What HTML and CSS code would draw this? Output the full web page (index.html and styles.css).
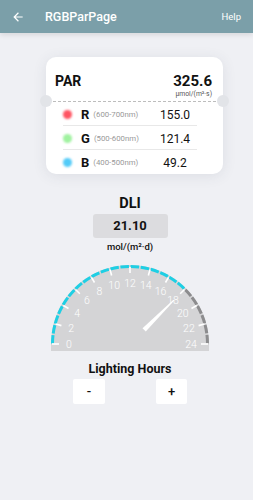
FILE: index.html
```html
<!DOCTYPE html>
<html>
<head>
<meta charset="utf-8">
<link rel="stylesheet" href="styles.css">
</head>
<body>
<header class="appbar">
  <svg class="back" viewBox="0 0 24 24" width="14" height="14"><path d="M20 11H7.83l5.59-5.59L12 4l-8 8 8 8 1.41-1.41L7.83 13H20v-2z" fill="#fff"/></svg>
  <div class="title">RGBParPage</div>
  <div class="help">Help</div>
</header>
<main>
  <section class="card">
    <span class="notch notch-l"></span>
    <span class="notch notch-r"></span>
    <div class="card-top">
      <div class="par">PAR</div>
      <div class="par-val">
        <div class="num">325.6</div>
        <div class="unit">µmol/(m²·s)</div>
      </div>
    </div>
    <div class="dash"></div>
    <div class="rows">
      <div class="row"><span class="dot red"></span><span class="ch">R</span><span class="range">(600-700nm)</span><span class="val">155.0</span></div>
      <div class="row"><span class="dot green"></span><span class="ch">G</span><span class="range">(500-600nm)</span><span class="val">121.4</span></div>
      <div class="row"><span class="dot blue"></span><span class="ch">B</span><span class="range">(400-500nm)</span><span class="val">49.2</span></div>
    </div>
  </section>
  <section class="dli">
    <div class="dli-title">DLI</div>
    <div class="dli-box">21.10</div>
    <div class="dli-unit">mol/(m²·d)</div>
  </section>
  <svg class="gauge" viewBox="0 0 253 93" width="253" height="93">
    <path d="M51 93 L51 86 A79 79 0 0 1 209 86 L209 93 Z" fill="#d4d4d6"/>
    <path d="M52.5 86 A77.5 77.5 0 0 1 184.8 31.2" fill="none" stroke="#1ecfe4" stroke-width="3" stroke-dasharray="8.55 1.6" stroke-dashoffset="-0.4"/>
    <path d="M184.8 31.2 A77.5 77.5 0 0 1 207.5 86" fill="none" stroke="#8c8c8e" stroke-width="3" stroke-dasharray="8.55 1.6" stroke-dashoffset="-0.8"/>
    <g stroke="#fff" stroke-width="1.6">
      <line x1="59" y1="86" x2="52" y2="86"/>
      <line x1="59" y1="86" x2="53" y2="86" transform="rotate(15 130 86)"/>
      <line x1="59" y1="86" x2="53" y2="86" transform="rotate(30 130 86)"/>
      <line x1="59" y1="86" x2="53" y2="86" transform="rotate(45 130 86)"/>
      <line x1="59" y1="86" x2="53" y2="86" transform="rotate(60 130 86)"/>
      <line x1="59" y1="86" x2="53" y2="86" transform="rotate(75 130 86)"/>
      <line x1="59" y1="86" x2="53" y2="86" transform="rotate(90 130 86)"/>
      <line x1="59" y1="86" x2="53" y2="86" transform="rotate(105 130 86)"/>
      <line x1="59" y1="86" x2="53" y2="86" transform="rotate(120 130 86)"/>
      <line x1="59" y1="86" x2="53" y2="86" transform="rotate(135 130 86)"/>
      <line x1="59" y1="86" x2="53" y2="86" transform="rotate(150 130 86)"/>
      <line x1="59" y1="86" x2="53" y2="86" transform="rotate(165 130 86)"/>
      <line x1="59" y1="86" x2="52" y2="86" transform="rotate(180 130 86)"/>
    </g>
    <g class="labels" fill="#fff" text-anchor="middle" dominant-baseline="central">
      <text x="69" y="86">0</text>
      <text x="71.1" y="70.2">2</text>
      <text x="77.2" y="55.5">4</text>
      <text x="86.9" y="42.9">6</text>
      <text x="99.5" y="33.2">8</text>
      <text x="114.2" y="27.1">10</text>
      <text x="130" y="25">12</text>
      <text x="145.8" y="27.1">14</text>
      <text x="160.5" y="33.2">16</text>
      <text x="173.1" y="42.9">18</text>
      <text x="182.8" y="55.5">20</text>
      <text x="188.9" y="70.2">22</text>
      <text x="191" y="86">24</text>
    </g>
    <polygon points="150,83.7 192,85.4 192,86.6 150,88.3" fill="#fff" transform="rotate(-45 130 86)"/>
  </svg>
  <section class="hours">
    <div class="hours-title">Lighting Hours</div>
    <div class="btns">
      <div class="btn">-</div>
      <div class="btn">+</div>
    </div>
  </section>
</main>
</body>
</html>
```
FILE: styles.css
```css
html, body {
  margin: 0;
  padding: 0;
}
body {
  background: #eff0f4;
  font-family: Roboto, "Liberation Sans", sans-serif;
  color: #111;
  width: 253px;
  height: 500px;
  overflow: hidden;
}
.appbar {
  height: 33px;
  background: #7b9fa9;
  display: flex;
  align-items: center;
  color: #fff;
  box-shadow: 0 2px 5px rgba(0,0,0,0.10);
}
.back {
  margin-left: 11px;
  display: block;
}
.title {
  margin-left: 20px;
  font-size: 12.5px;
  font-weight: 500;
}
.help {
  margin-left: auto;
  margin-right: 12px;
  font-size: 9.5px;
  font-weight: 400;
}
.card {
  position: relative;
  margin: 24px 0 0 46px;
  width: 177px;
  height: 117px;
  background: #fff;
  border-radius: 10px;
  box-shadow: 0 2px 14px rgba(60,70,90,0.10);
}
.notch {
  position: absolute;
  top: 38px;
  width: 12px;
  height: 12px;
  border-radius: 50%;
  background: #e2e4e8;
}
.notch-l { left: -6px; }
.notch-r { right: -6px; }
.card-top {
  height: 44px;
  box-sizing: border-box;
  padding: 16px 11px 0 9px;
  display: flex;
  justify-content: space-between;
  align-items: flex-start;
}
.par {
  font-size: 14px;
  font-weight: 700;
  line-height: 17px;
}
.par-val {
  text-align: right;
}
.num {
  font-size: 15px;
  font-weight: 700;
  line-height: 17px;
}
.unit {
  font-size: 6.8px;
  line-height: 9px;
  color: #555;
}
.dash {
  border-top: 1px dashed #bdbdbd;
  margin: 0 7px;
}
.rows {
  margin: 0 26px 0 17px;
}
.row {
  height: 23px;
  display: flex;
  align-items: center;
  padding-top: 2px;
  box-sizing: border-box;
}
.row + .row {
  height: 24px;
  border-top: 1px solid #e8e8e8;
}
.dot {
  width: 9px;
  height: 9px;
  margin-left: -0.5px;
  border-radius: 50%;
  filter: blur(1.3px);
}
.red { background: #ff5462; }
.green { background: #a0f2a0; }
.blue { background: #52cbf8; }
.ch {
  margin-left: 9.5px;
  font-size: 13px;
  font-weight: 700;
}
.range {
  margin-left: 4px;
  font-size: 7.8px;
  color: #999;
}
.val {
  margin-left: auto;
  width: 44px;
  text-align: center;
  font-size: 12px;
}
.dli {
  display: flex;
  flex-direction: column;
  align-items: center;
  padding-left: 7px;
}
.dli-title {
  margin-top: 21px;
  font-size: 14.5px;
  font-weight: 700;
  line-height: 18px;
}
.dli-box {
  margin-top: 1px;
  width: 75px;
  height: 24px;
  line-height: 24px;
  text-align: center;
  background: #dcdcdf;
  border-radius: 3px;
  font-size: 13px;
  font-weight: 700;
}
.dli-unit {
  margin-top: 3px;
  font-size: 9.5px;
  font-weight: 500;
  line-height: 12px;
}
.gauge {
  display: block;
  margin-top: 5px;
}
.labels {
  font-family: Roboto, "Liberation Sans", sans-serif;
  font-size: 10.5px;
  font-weight: 300;
}
.hours {
  display: flex;
  flex-direction: column;
  align-items: center;
  padding-left: 7px;
}
.hours-title {
  margin-top: 10px;
  font-size: 12.5px;
  font-weight: 700;
  line-height: 16px;
}
.btns {
  margin-top: 2px;
  display: flex;
  gap: 51px;
}
.btn {
  width: 32px;
  height: 25px;
  line-height: 25px;
  text-align: center;
  background: #fff;
  border-radius: 2px;
  font-size: 13px;
  font-weight: 500;
}
.btn + .btn {
  width: 31px;
}
```
